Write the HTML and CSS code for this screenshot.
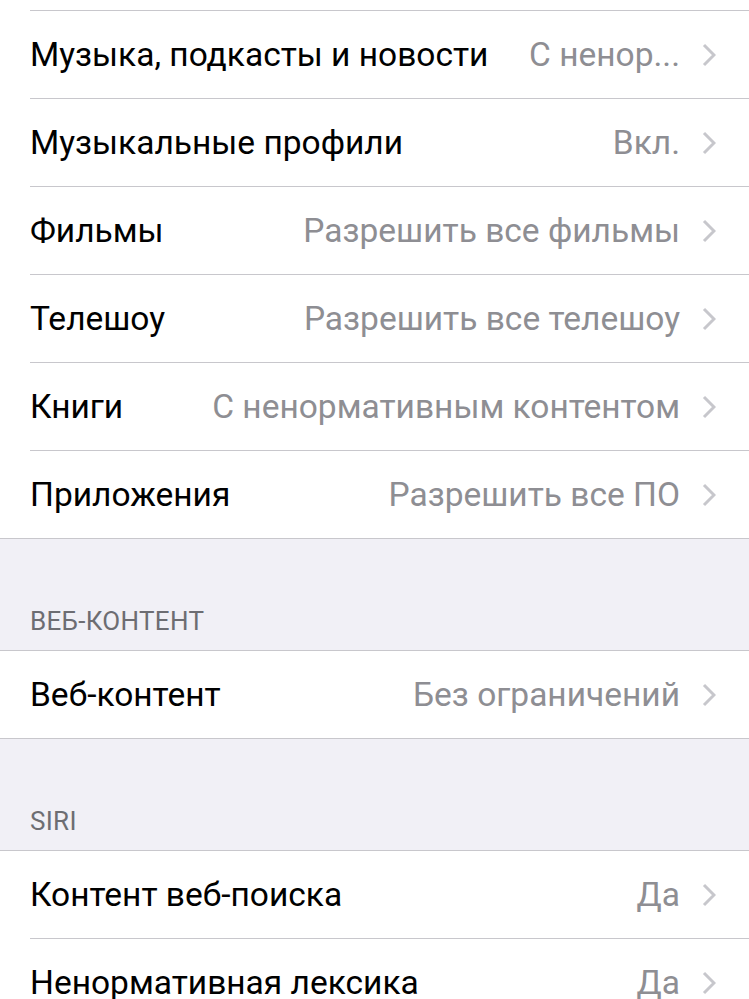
FILE: index.html
```html
<!DOCTYPE html>
<html lang="ru">
<head>
    <meta charset="UTF-8">
    <meta name="viewport" content="width=device-width, initial-scale=1.0">
    <title>Ограничения</title>
    <link rel="stylesheet" href="styles.css">
</head>
<body>
    <div class="group group-top">
        <div class="row">
            <span class="label">Музыка, подкасты и новости</span>
            <span class="value">С ненор...</span>
            <svg class="chevron" viewBox="0 0 14 24"><path d="M2 2 L12 12 L2 22"/></svg>
        </div>
        <div class="row">
            <span class="label">Музыкальные профили</span>
            <span class="value">Вкл.</span>
            <svg class="chevron" viewBox="0 0 14 24"><path d="M2 2 L12 12 L2 22"/></svg>
        </div>
        <div class="row">
            <span class="label">Фильмы</span>
            <span class="value">Разрешить все фильмы</span>
            <svg class="chevron" viewBox="0 0 14 24"><path d="M2 2 L12 12 L2 22"/></svg>
        </div>
        <div class="row">
            <span class="label">Телешоу</span>
            <span class="value">Разрешить все телешоу</span>
            <svg class="chevron" viewBox="0 0 14 24"><path d="M2 2 L12 12 L2 22"/></svg>
        </div>
        <div class="row">
            <span class="label">Книги</span>
            <span class="value">С ненормативным контентом</span>
            <svg class="chevron" viewBox="0 0 14 24"><path d="M2 2 L12 12 L2 22"/></svg>
        </div>
        <div class="row">
            <span class="label">Приложения</span>
            <span class="value">Разрешить все ПО</span>
            <svg class="chevron" viewBox="0 0 14 24"><path d="M2 2 L12 12 L2 22"/></svg>
        </div>
    </div>

    <div class="section-header">ВЕБ-КОНТЕНТ</div>
    <div class="group">
        <div class="row">
            <span class="label">Веб-контент</span>
            <span class="value">Без ограничений</span>
            <svg class="chevron" viewBox="0 0 14 24"><path d="M2 2 L12 12 L2 22"/></svg>
        </div>
    </div>

    <div class="section-header">SIRI</div>
    <div class="group">
        <div class="row">
            <span class="label">Контент веб-поиска</span>
            <span class="value">Да</span>
            <svg class="chevron" viewBox="0 0 14 24"><path d="M2 2 L12 12 L2 22"/></svg>
        </div>
        <div class="row">
            <span class="label">Ненормативная лексика</span>
            <span class="value">Да</span>
            <svg class="chevron" viewBox="0 0 14 24"><path d="M2 2 L12 12 L2 22"/></svg>
        </div>
    </div>
</body>
</html>
```

FILE: styles.css
```css
body {
    margin: 0;
    background-color: #f1f0f6;
    font-family: Roboto, "Noto Sans", sans-serif;
    overflow: hidden;
}

.group {
    background-color: #fff;
    border-top: 1px solid #c8c7cc;
    border-bottom: 1px solid #c8c7cc;
}

.group-top {
    border-top: none;
    padding-top: 10px;
}

.row {
    display: flex;
    align-items: center;
    height: 87px;
    margin-left: 30px;
    padding-right: 33px;
    border-top: 1px solid #c8c7cc;
}

.group .row:first-child {
    border-top: none;
}

.group-top .row:first-child {
    border-top: 1px solid #c8c7cc;
}

.label {
    font-size: 33.5px;
    color: #000;
    white-space: nowrap;
}

.value {
    flex: 1;
    text-align: right;
    font-size: 33.5px;
    color: #8e8e93;
    white-space: nowrap;
    margin-left: 20px;
    margin-right: 22px;
}

.chevron {
    width: 14px;
    height: 24px;
    fill: none;
    stroke: #c7c7cc;
    stroke-width: 3;
}

.section-header {
    height: 111px;
    box-sizing: border-box;
    padding: 0 30px 14px;
    display: flex;
    align-items: flex-end;
    font-size: 26px;
    letter-spacing: 0.3px;
    color: #6d6d72;
}
```
